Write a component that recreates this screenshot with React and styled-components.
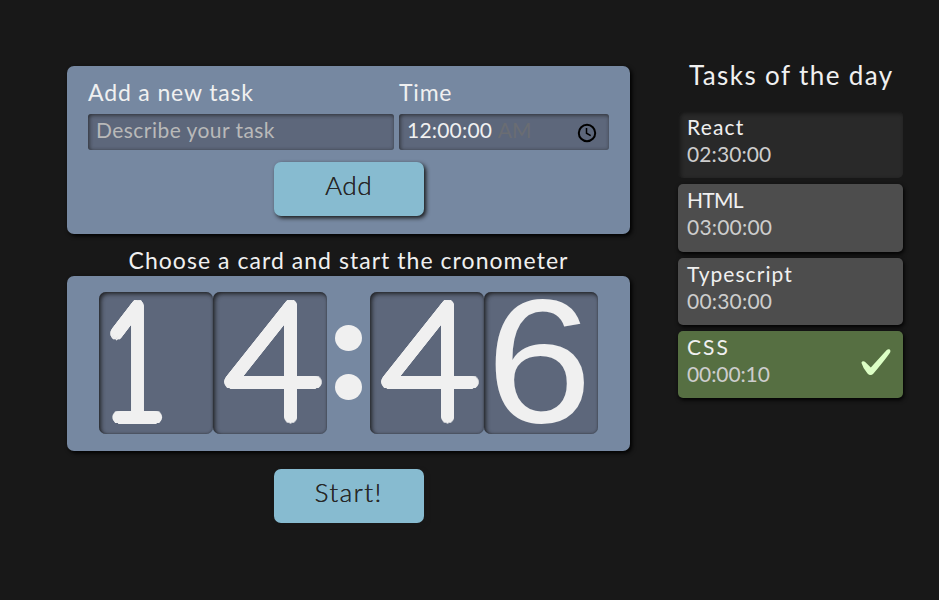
import React from "react";
import styled, { createGlobalStyle } from "styled-components";

const GlobalStyle = createGlobalStyle`
  * { box-sizing: border-box; }
  body {
    margin: 0;
    background: #181818;
    color: #f0f0f0;
    font-family: Lato, "Open Sans", sans-serif;
    overflow: hidden;
  }
`;

const Page = styled.main`
  display: flex;
  align-items: flex-start;
  gap: 48px;
  width: 939px;
  height: 600px;
  padding: 66px 36px 0 67px;
`;

const Main = styled.section`
  display: flex;
  flex-direction: column;
  align-items: center;
  width: 563px;
`;

const Panel = styled.div`
  width: 100%;
  background: #7688a1;
  border-radius: 7px;
  box-shadow: 2px 2px 4px #000;
`;

const Form = styled(Panel)`
  display: flex;
  flex-direction: column;
  align-items: center;
  height: 168px;
  padding: 12px 21px 0;
`;

const Fields = styled.div`
  display: grid;
  grid-template-columns: 306px 210px;
  column-gap: 5px;
  margin-bottom: 12px;
`;

const Text = styled.span`
  display: block;
  white-space: pre;
  font-size: ${(p) => p.$size || 22}px;
  line-height: ${(p) => p.$line || 28}px;
  letter-spacing: ${(p) => p.$track || 0}px;
  color: ${(p) => p.$color || "#f0f0f0"};
`;

const Label = styled(Text)`
  height: 36px;
`;

const Field = styled.div`
  display: flex;
  justify-content: space-between;
  height: 36px;
  padding: 2px 12px 0 8px;
  border-radius: 3px;
  background: #5d677b;
  box-shadow: inset 1px 1px 4px rgba(24, 24, 24, 0.75);
`;

const TimeValue = styled.div`
  display: flex;
`;

const ClockIcon = styled.svg`
  width: 20px;
  height: 20px;
  margin-top: 7px;
`;

const Button = styled.button`
  width: 150px;
  height: 54px;
  padding: 0 0 8px;
  border: 0;
  border-radius: 7px;
  background: #87bbd0;
  color: #272727;
  font: 300 26px/46px Lato, "Open Sans", sans-serif;
  letter-spacing: ${(p) => p.$track}px;
  text-shadow: 0.3px 0 0 #272727;
  box-shadow: 2px 2px 4px #181818;
`;

const Prompt = styled(Text)`
  height: 42px;
  padding-top: 12px;
`;

const Clock = styled(Panel)`
  display: flex;
  height: 175px;
  padding: 16px 32px;
  margin-bottom: 18px;
`;

const Cell = styled.div`
  width: 114px;
  height: 142px;
  border-radius: 7px;
  background: #5d677b;
  box-shadow: inset 2px 2px 4px rgba(24, 24, 24, 0.8), inset 0 0 2px rgba(24, 24, 24, 0.5);
`;

const roundStroke = (radius, stretch, color) =>
  Array.from({ length: 32 }, (_, i) => {
    const angle = (i * Math.PI) / 16;
    const x = (Math.cos(angle) * radius) / stretch;
    const y = Math.sin(angle) * radius;
    return `${x.toFixed(2)}px ${y.toFixed(2)}px 0 ${color}`;
  }).join(", ");

const Digit = styled.span`
  display: block;
  width: max-content;
  transform: translate(${(p) => p.$x}px, ${(p) => p.$y ?? -7}px) scaleX(${(p) => p.$stretch});
  transform-origin: left;
  font-size: 160px;
  line-height: 142px;
  font-weight: 100;
  text-shadow: ${(p) => roundStroke(5.5, p.$stretch, "#f0f0f0")},
    ${(p) => roundStroke(2.5, p.$stretch, "#f0f0f0")};
`;

const RoundDigit = styled(Digit)`
  font-family: "Liberation Sans", Arial, sans-serif;
  font-size: 177px;
  font-weight: 400;
  text-shadow: none;
`;

const Colon = styled.div`
  display: flex;
  flex-direction: column;
  align-items: center;
  gap: 23px;
  width: 43px;
  padding-top: 33px;
`;

const Dot = styled.i`
  width: 27px;
  height: 26px;
  border-radius: 50%;
  background: #f0f0f0;
`;

const Aside = styled.aside`
  width: 225px;
`;

const Title = styled(Text)`
  padding-left: 11px;
  height: 46px;
  margin-top: -8px;
  margin-bottom: 7px;
`;

const List = styled.div`
  display: grid;
  grid-template-rows: 67px 68px 67px 67px;
  gap: 6px;
`;

const themes = {
  selected: "background: #292929; box-shadow: inset 2px 2px 4px #151515;",
  normal: "background: #4d4d4d; box-shadow: 1px 2px 4px #000;",
  done: "background: #566f42; box-shadow: 1px 2px 4px #000;",
};

const Task = styled.div`
  display: flex;
  justify-content: space-between;
  padding: 2px 12px 0 9px;
  border-radius: 5px;
  ${(p) => themes[p.$kind]}
`;

const Check = styled.svg`
  width: 30px;
  height: 28px;
  margin-top: 15px;
`;

const tasks = [
  { name: "React", time: "02:30:00", kind: "selected", nt: 1.2, tt: 0.1 },
  { name: "HTML", time: "03:00:00", kind: "normal", nt: -0.7, tt: 0.2 },
  { name: "Typescript", time: "00:30:00", kind: "normal", nt: 1.05, tt: 0.2 },
  { name: "CSS", time: "00:00:10", kind: "done", nt: 2, tt: -0.1 },
];

export default function App() {
  return (
    <>
      <GlobalStyle />
      <Page>
        <Main>
          <Form>
            <Fields>
              <Label $size={23} $track={0.85}>Add a new task</Label>
              <Label $size={23} $track={0.8}>Time</Label>
              <Field>
                <Text $color="#b9b9b9" $size={21} $track={0.45}>Describe your task</Text>
              </Field>
              <Field>
                <TimeValue>
                  <Text $size={21} $track={0.2}>12:00:00 </Text>
                  <Text $size={21} $color="#6a6d73">AM</Text>
                </TimeValue>
                <ClockIcon viewBox="0 0 20 20" fill="none" stroke="#000" strokeWidth="2">
                  <circle cx="10" cy="10" r="8.2" />
                  <path d="M9.5 5v5.2l4.2 2.5" strokeWidth="1.5" />
                </ClockIcon>
              </Field>
            </Fields>
            <Button $track={0.6}>Add</Button>
          </Form>
          <Prompt $size={23} $track={1.04}>Choose a card and start the cronometer</Prompt>
          <Clock>
            <Cell><Digit $x={3.4} $stretch={0.69}>1</Digit></Cell>
            <Cell><Digit $x={11.8} $stretch={1.05}>4</Digit></Cell>
            <Colon><Dot /><Dot /></Colon>
            <Cell><Digit $x={11.8} $stretch={1.05}>4</Digit></Cell>
            <Cell><RoundDigit $x={2} $y={-2} $stretch={1.08}>6</RoundDigit></Cell>
          </Clock>
          <Button $track={1.4}>Start!</Button>
        </Main>
        <Aside>
          <Title $size={26} $line={34} $track={1.4}>Tasks of the day</Title>
          <List>
            {tasks.map((t) => (
              <Task key={t.name} $kind={t.kind}>
                <div>
                  <Text $size={21} $line={27} $track={t.nt}>{t.name}</Text>
                  <Text $size={21} $line={27} $track={t.tt} $color="#cdcdcd">{t.time}</Text>
                </div>
                {t.kind === "done" && (
                  <Check viewBox="0 0 30 28" fill="#dcffc5">
                    <path d="M.5 15C.3 13 3 12.5 4.2 14L9.8 19.5 25.500 2.200C27.500.3 30.200 1.500 29.200 4.200Q27.500 7.500 12.500 25.500 9.500 28.500 6.500 25.500 2 20.500 .5 15Z" />
                  </Check>
                )}
              </Task>
            ))}
          </List>
        </Aside>
      </Page>
    </>
  );
}
